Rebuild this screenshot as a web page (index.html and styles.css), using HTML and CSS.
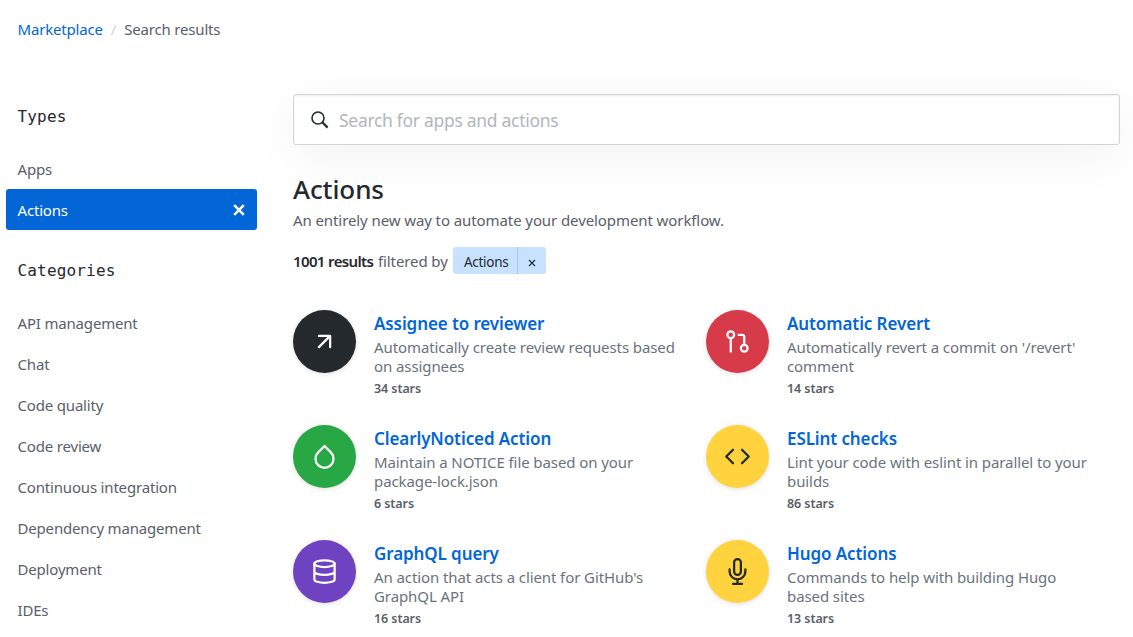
FILE: index.html
```html
<!DOCTYPE html>
<html lang="en">
<head>
<meta charset="utf-8">
<title>Marketplace · Search results</title>
<link rel="stylesheet" href="styles.css">
</head>
<body>
<nav class="breadcrumb"><a href="#">Marketplace</a><span class="slash">/</span><span class="current">Search results</span></nav>
<div class="layout">
  <aside class="sidebar">
    <h2>Types</h2>
    <ul>
      <li><a href="#">Apps</a></li>
      <li class="selected"><a href="#">Actions</a>
        <svg width="14" height="14" viewBox="0 0 14 14"><path d="M2.2 2.2 11.8 11.8M11.8 2.2 2.2 11.8" stroke="#fff" stroke-width="2.5" fill="none"/></svg></li>
    </ul>
    <h2 class="second">Categories</h2>
    <ul>
      <li><a href="#">API management</a></li>
      <li><a href="#">Chat</a></li>
      <li><a href="#">Code quality</a></li>
      <li><a href="#">Code review</a></li>
      <li><a href="#">Continuous integration</a></li>
      <li><a href="#">Dependency management</a></li>
      <li><a href="#">Deployment</a></li>
      <li><a href="#">IDEs</a></li>
    </ul>
  </aside>
  <main class="content">
    <div class="search">
      <svg width="18" height="18" viewBox="0 0 18 18" fill="none" stroke="#24292e"><circle cx="7" cy="7" r="6" stroke-width="1.6"/><path d="M11.3 11.3 16.6 16.6" stroke-width="2.2"/></svg>
      <span>Search for apps and actions</span>
    </div>
    <h1>Actions</h1>
    <p class="lead">An entirely new way to automate your development workflow.</p>
    <div class="filter">
      <strong>1001 results</strong><span class="by">filtered by</span>
      <span class="tag"><span class="tag-name">Actions</span><span class="tag-close"><svg width="8" height="8" viewBox="0 0 8 8"><path d="M1 1 7 7M7 1 1 7" stroke="#24292e" stroke-width="1.1"/></svg></span></span>
    </div>
    <div class="grid">
      <article class="card">
        <div class="icon dark"><svg width="27" height="27" viewBox="0 0 24 24"><path d="M7 17 17 7M7 7h10v10"/></svg></div>
        <div class="text"><h3>Assignee to reviewer</h3><p>Automatically create review requests based<br>on assignees</p><small>34 stars</small></div>
      </article>
      <article class="card">
        <div class="icon red"><svg width="27" height="27" viewBox="0 0 24 24"><circle cx="18" cy="18" r="3"/><circle cx="6" cy="6" r="3"/><path d="M13 6h3a2 2 0 0 1 2 2v7M6 9v12"/></svg></div>
        <div class="text"><h3>Automatic Revert</h3><p>Automatically revert a commit on '/revert'<br>comment</p><small>14 stars</small></div>
      </article>
      <article class="card">
        <div class="icon green"><svg width="27" height="27" viewBox="0 0 24 24"><path d="M12 2.69l5.66 5.66a8 8 0 1 1-11.31 0z"/></svg></div>
        <div class="text"><h3>ClearlyNoticed Action</h3><p>Maintain a NOTICE file based on your<br>package-lock.json</p><small>6 stars</small></div>
      </article>
      <article class="card">
        <div class="icon yellow"><svg width="27" height="27" viewBox="0 0 24 24"><path d="M16 18l6-6-6-6M8 6l-6 6 6 6"/></svg></div>
        <div class="text"><h3>ESLint checks</h3><p>Lint your code with eslint in parallel to your<br>builds</p><small>86 stars</small></div>
      </article>
      <article class="card">
        <div class="icon purple"><svg width="27" height="27" viewBox="0 0 24 24"><ellipse cx="12" cy="5" rx="9" ry="3"/><path d="M21 12c0 1.66-4 3-9 3s-9-1.34-9-3M3 5v14c0 1.66 4 3 9 3s9-1.34 9-3V5"/></svg></div>
        <div class="text"><h3>GraphQL query</h3><p>An action that acts a client for GitHub's<br>GraphQL API</p><small>16 stars</small></div>
      </article>
      <article class="card">
        <div class="icon yellow"><svg width="27" height="27" viewBox="0 0 24 24"><path d="M12 1a3 3 0 0 0-3 3v8a3 3 0 0 0 6 0V4a3 3 0 0 0-3-3zM19 10v2a7 7 0 0 1-14 0v-2M12 19v4M8 23h8"/></svg></div>
        <div class="text"><h3>Hugo Actions</h3><p>Commands to help with building Hugo<br>based sites</p><small>13 stars</small></div>
      </article>
    </div>
  </main>
</div>
</body>
</html>
```
FILE: styles.css
```css
* { box-sizing: border-box; }
html { overflow: hidden; }
body { margin: 0; width: 1133px; height: 637px; overflow: hidden; background: #fff; color: #24292e; font: 15px/24px "Noto Sans", sans-serif; letter-spacing: -0.18px; }
a { color: #0366d6; text-decoration: none; }
h1, h2, h3, p, ul { margin: 0; padding: 0; font-weight: 400; }
ul { list-style: none; }
svg { display: block; flex: none; }
.breadcrumb { display: flex; gap: 8px; padding: 17px 17.5px 0; height: 94px; color: #586069; }
.slash { color: #d1d5da; }
.layout { display: flex; align-items: flex-start; }
.sidebar { width: 251px; margin-left: 6px; padding-top: 11px; flex: none; }
.sidebar h2 { font: 16px/24px "DejaVu Sans Mono", monospace; letter-spacing: 0.17px; padding-left: 11.5px; margin-bottom: 19px; }
.sidebar h2.second { margin-top: 29px; }
.sidebar li { display: flex; align-items: center; justify-content: space-between; height: 41px; padding: 0 11px 0 11.5px; border-radius: 3px; }
.sidebar li a { color: #586069; }
.sidebar .selected { background: #0366d6; }
.sidebar .selected a { color: #fff; }
.content { margin-left: 36px; width: 827px; flex: none; }
.search { display: flex; align-items: center; gap: 10px; height: 51px; padding: 0 17px; border: 1px solid #d1d5da; border-radius: 3px; background: #fff; color: #b1b6bb; font-size: 17.5px; letter-spacing: -0.3px; box-shadow: inset 0 1px 2px rgba(27,31,35,.075), 0 11px 52px rgba(0,0,0,.055); }
h1 { font-size: 26px; font-weight: 500; line-height: 36px; margin-top: 26px; letter-spacing: -0.1px; }
.lead { color: #586069; line-height: 24px; margin-top: 1px; letter-spacing: -0.09px; }
.filter { display: flex; align-items: center; height: 27px; margin-top: 15px; }
.filter strong { width: 81px; font-weight: 600; letter-spacing: -0.63px; }
.by { width: 70px; color: #586069; margin: 0 5px 0 4px; letter-spacing: -0.1px; white-space: nowrap; }
.tag { display: flex; height: 27px; border-radius: 3px; background: #c8e1ff; font-size: 13.5px; line-height: 30px; letter-spacing: -0.3px; }
.tag-name { width: 64px; padding-left: 11px; }
.tag-close { width: 29px; display: flex; align-items: center; justify-content: center; padding-top: 4px; border-left: 1px solid #a9c6e8; }
.grid { display: grid; grid-template-columns: 413px 413px; grid-auto-rows: 115px; margin-top: 36px; }
.card { display: flex; gap: 18px; }
.icon { width: 63px; height: 63px; border-radius: 50%; flex: none; display: flex; align-items: center; justify-content: center; box-shadow: 0 1px 5px rgba(27,31,35,.15); }
.icon svg { fill: none; stroke: #fff; stroke-width: 2; stroke-linecap: round; stroke-linejoin: round; }
.dark { background: #24292e; }
.red { background: #d73a49; }
.green { background: #28a745; }
.purple { background: #6f42c1; }
.yellow { background: #ffd33d; }
.yellow svg { stroke: #24292e; }
.text { white-space: nowrap; }
.card h3 { color: #0366d6; font-size: 17px; font-weight: 600; line-height: 28px; letter-spacing: -0.1px; }
.card p { color: #6a737d; line-height: 19px; letter-spacing: -0.09px; }
.card small { display: block; color: #586069; font-size: 12.5px; font-weight: 600; line-height: 26px; letter-spacing: -0.08px; }
```
